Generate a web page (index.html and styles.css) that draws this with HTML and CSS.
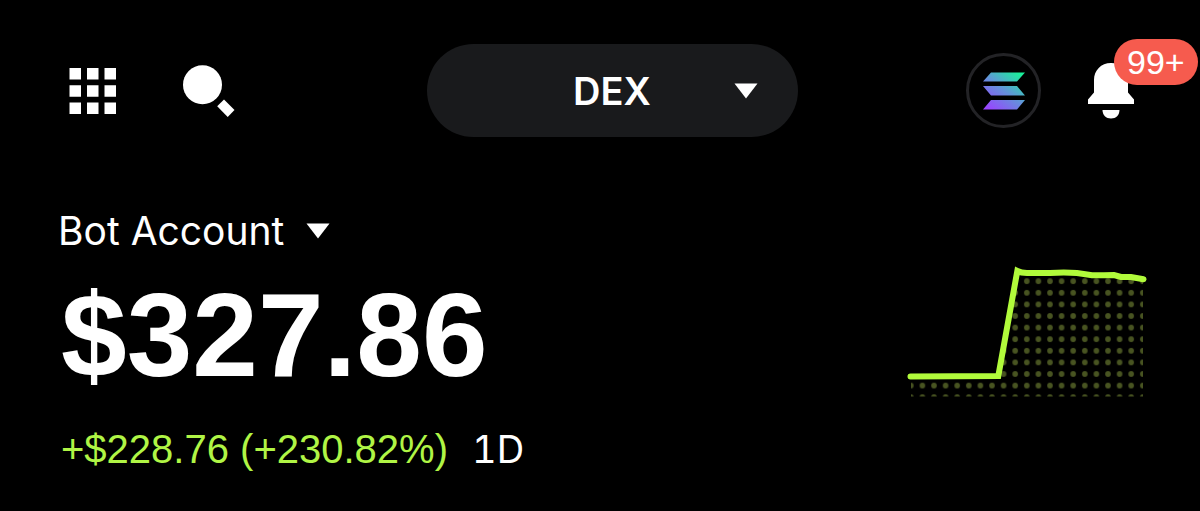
FILE: index.html
```
<!DOCTYPE html>
<html lang="en">
<head>
    <meta charset="utf-8">
    <title>Bot Account</title>
    <link rel="stylesheet" href="styles.css">
</head>
<body>
    <header class="topbar">
        <div class="topbar-left">
            <button class="icon-btn" type="button" aria-label="Menu">
                <svg width="48" height="48" viewBox="0 0 48 48" fill="#fff">
                    <path d="M0.5 1h11.5v11.5h-11.5zM18 1h11.5v11.5h-11.5zM35.5 1h11.5v11.5h-11.5zM0.5 18.3h11.5v11.5h-11.5zM18 18.3h11.5v11.5h-11.5zM35.5 18.3h11.5v11.5h-11.5zM0.5 35.6h11.5v11.5h-11.5zM18 35.6h11.5v11.5h-11.5zM35.5 35.6h11.5v11.5h-11.5z"/>
                </svg>
            </button>
            <button class="icon-btn" type="button" aria-label="Search">
                <svg width="54" height="54" viewBox="0 0 54 54" fill="#fff">
                    <circle cx="20.5" cy="20.7" r="19.5"/>
                    <path d="M42 35.5L52.5 46L45.7 53L35.2 42.3Z"/>
                </svg>
            </button>
        </div>
        <button class="mode-btn" type="button">
            <span class="mode-label">DEX</span>
            <svg class="caret" width="24" height="16" viewBox="0 0 24 16" fill="#fff"><path d="M0.5 0.5h23L12 15.5z"/></svg>
        </button>
        <div class="topbar-right">
            <button class="chain-btn" type="button" aria-label="Solana">
                <svg width="42" height="38" viewBox="0 0 42 38">
                    <defs>
                        <linearGradient id="sol" gradientUnits="userSpaceOnUse" x1="7" y1="38" x2="35" y2="0">
                            <stop offset="0" stop-color="#9945ff"/>
                            <stop offset="0.5" stop-color="#6590dc"/>
                            <stop offset="1" stop-color="#19f09a"/>
                        </linearGradient>
                    </defs>
                    <path fill="url(#sol)" d="M8 0.5H42L34 9.5H0zM0 14H34L42 23.5H8zM8 28H42L34 37.5H0z"/>
                </svg>
            </button>
            <button class="icon-btn bell-btn" type="button" aria-label="Notifications">
                <svg width="48" height="56" viewBox="0 0 48 56" fill="#fff">
                    <path d="M24 0C14 0 7 7.5 7 17V29.5L1 36.5V41H47V36.5L41 29.5V17C41 7.5 34 0 24 0z"/>
                    <path d="M15.5 47H32.5C32.5 52 29 55.5 24 55.5S15.5 52 15.5 47z"/>
                </svg>
                <span class="badge">99+</span>
            </button>
        </div>
    </header>
    <main class="account">
        <div class="summary">
            <button class="account-btn" type="button">
                Bot Account
                <svg class="caret" width="24" height="16" viewBox="0 0 24 16" fill="#fff"><path d="M0.5 0.5h23L12 15.5z"/></svg>
            </button>
            <div class="balance">$327.86</div>
            <div class="change"><span class="gain">+$228.76 (+230.82%)</span><span class="period">1D</span></div>
        </div>
        <svg class="chart" width="240" height="132" viewBox="0 0 240 132">
            <defs>
                <pattern id="dots" patternUnits="userSpaceOnUse" x="-2" y="9.4" width="11.6" height="11.6">
                    <circle cx="5.8" cy="5.8" r="2.8" fill="#485421"/>
                </pattern>
            </defs>
            <path fill="url(#dots)" d="M4 110.5H91.5L110 7L143 7L171 7L197 10L236 13V130.5H4z"/>
            <path class="chart-line" d="M3.5 110.5L91.3 110L110.3 5Q114 7 120 7H143Q157 6 170 7L185 9.3H197L207 9L214 11H224L236.5 13.3"/>
        </svg>
    </main>
</body>
</html>
```
FILE: styles.css
```
body {
    margin: 0;
    background-color: #000;
    color: #fff;
    font-family: Inter, "Liberation Sans", sans-serif;
}
button {
    padding: 0;
    border: none;
    background: none;
    color: inherit;
    font: inherit;
    cursor: pointer;
}
svg {
    display: block;
}
.topbar {
    display: grid;
    grid-template-columns: 1fr minmax(200px, 371px) 1fr;
    align-items: center;
    padding: 44px 45px 0 69px;
}
.topbar-left, .topbar-right {
    display: flex;
    align-items: center;
}
.topbar-left {
    gap: 65px;
}
.topbar-right {
    justify-content: flex-end;
    gap: 46px;
}
.mode-btn {
    display: grid;
    grid-template-columns: 1fr auto 1fr;
    align-items: center;
    height: 93px;
    border-radius: 47px;
    background-color: #191a1c;
    font-size: 38px;
    font-weight: 600;
}
.mode-label {
    grid-column: 2;
}
.mode-btn .caret {
    justify-self: end;
    margin-right: 40px;
}
.chain-btn {
    display: flex;
    align-items: center;
    justify-content: center;
    box-sizing: border-box;
    width: 75px;
    height: 75px;
    border: 3px solid #232326;
    border-radius: 50%;
}
.bell-btn {
    position: relative;
    margin-right: 20px;
}
.badge {
    position: absolute;
    top: -24px;
    left: 27px;
    padding: 0 13px;
    border-radius: 23px;
    background-color: #f65b4e;
    font-family: "Liberation Sans", Arial, sans-serif;
    font-size: 34px;
    line-height: 46px;
}
.account {
    display: flex;
    align-items: flex-start;
    justify-content: space-between;
    padding: 66px 53px 0 58px;
}
.account-btn {
    display: flex;
    align-items: center;
    gap: 22px;
    font-size: 39px;
    line-height: 56px;
}
.balance, .change {
    padding-left: 3px;
}
.balance {
    font-family: "Liberation Sans", Arial, sans-serif;
    font-size: 118px;
    font-weight: 700;
    line-height: 152px;
}
.change {
    display: flex;
    align-items: baseline;
    gap: 24px;
    line-height: 76px;
}
.gain {
    color: #b0f545;
    font-family: "Liberation Sans", Arial, sans-serif;
    font-size: 40px;
}
.period {
    font-size: 38px;
    font-variant-numeric: tabular-nums;
}
.chart {
    margin-top: 63px;
}
.chart-line {
    fill: none;
    stroke: #b1fb3b;
    stroke-width: 6px;
    stroke-linecap: round;
}
```
